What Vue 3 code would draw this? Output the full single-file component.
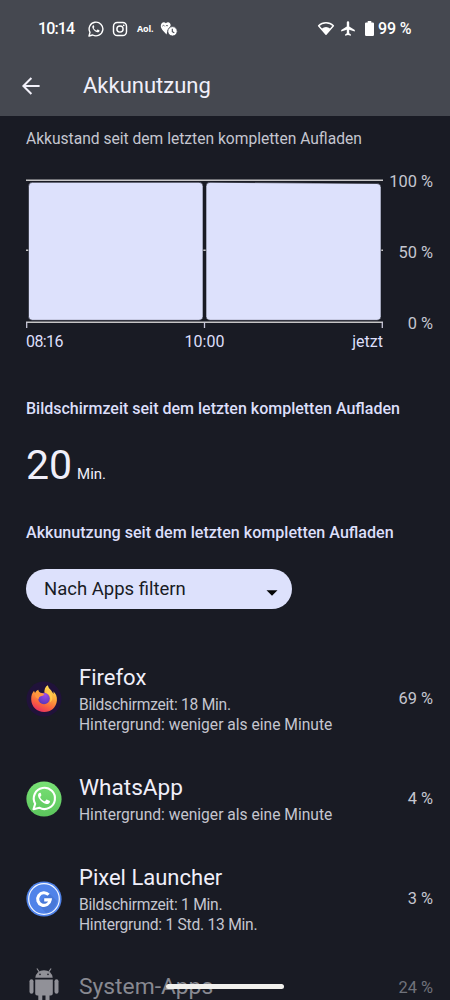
<script setup>
const apps = [
  { id: 'firefox', name: 'Firefox', lines: ['Bildschirmzeit: 18 Min.', 'Hintergrund: weniger als eine Minute'], pct: '69 %' },
  { id: 'whatsapp', name: 'WhatsApp', lines: ['Hintergrund: weniger als eine Minute'], pct: '4 %' },
  { id: 'launcher', name: 'Pixel Launcher', lines: ['Bildschirmzeit: 1 Min.', 'Hintergrund: 1 Std. 13 Min.'], pct: '3 %' },
  { id: 'system', name: 'System-Apps', lines: [], pct: '24 %' },
]
const hasDigits = (text) => /\d/.test(text)
</script>

<template>
  <div class="screen">
    <header class="top">
      <div class="status">
        <span class="clock">10:14</span>
        <svg class="s-wa" width="16" height="16" viewBox="0 0 24 24">
          <path d="M1.5 22.5 3 17A10.3 10.3 0 1 1 7 21Z" fill="none" stroke="#fff" stroke-width="2.1" stroke-linejoin="round" />
          <path d="M8.8 6.8c-.5-.6-1.100-.4-1.500 0-1.300 1.300-1 3.200.1 4.900 1.600 2.500 3.700 4.400 6.400 5.200 1.600.4 3.200-.5 3.500-1.800.1-.6.1-.9-.4-1.200l-2-1c-.5-.2-.8 0-1.100.4l-.7.9c-.3.3-.6.2-1 .1-1.600-.8-2.700-1.900-3.500-3.300-.2-.4 0-.6.200-.9l.6-.8c.1-.3.1-.5 0-.8Z" fill="#fff" />
        </svg>
        <svg class="s-ig" width="16" height="16" viewBox="0 0 16 16" fill="none" stroke="#fff" stroke-width="1.45">
          <rect x="1.500" y="1.500" width="13" height="13" rx="3.800" />
          <circle cx="8" cy="8" r="3.100" />
          <circle cx="11.700" cy="4.300" r=".9" fill="#fff" stroke="none" />
        </svg>
        <span class="aol">Aol.</span>
        <svg class="s-heart" width="18" height="16" viewBox="0 0 18 16">
          <path d="M6.500 13.500C4.500 11 .8 8.300.8 5 .8 1.500 4 .1 5.900 2.200 7.700.1 11 1.300 10.600 4.800L7.500 9.500Z" fill="#fff" />
          <path d="M2.300 5.200q1-1.600 2.300-.2M5.800 5q1.300-1.500 2.200.1" fill="none" stroke="#454850" stroke-width=".8" />
          <circle cx="12.500" cy="10.300" r="4.700" fill="#fff" stroke="#454850" stroke-width=".8" />
          <path d="M12.300 7.800v2.800l2 1.200" fill="none" stroke="#454850" stroke-width="1.100" />
        </svg>
        <span class="grow"></span>
        <svg class="s-wifi" width="18" height="15" viewBox="0 0 18 15">
          <path d="M1.600 4.800C5.700.8 12.300.8 16.400 4.800L9 13.300Z" fill="none" stroke="#fff" stroke-width="1.400" stroke-linejoin="round" />
          <path d="M4.600 7.700Q9 4.300 13.400 7.700L9 13.600Z" fill="#fff" />
        </svg>
        <svg class="s-plane" width="14" height="15" viewBox="0 0 14 15">
          <path d="M7 .3c.8 0 1.200.6 1.200 1.400v3.800l5.600 3.500v1.500L8.200 8.800v3.500l1.700 1.200v1.200L7 13.900l-2.900.8v-1.200l1.700-1.200V8.800L.2 10.500V9l5.600-3.500V1.700C5.800.9 6.200.3 7 .3Z" fill="#fff" />
        </svg>
        <svg class="s-bat" width="9" height="15" viewBox="0 0 9 15">
          <path d="M2.700 0h3.600v1.400h1.500q1.200 0 1.200 1.200v11.200Q9 15 7.800 15H1.200Q0 15 0 13.800V2.600Q0 1.400 1.200 1.400h1.500Z" fill="#fff" />
        </svg>
        <span class="charge">99 %</span>
      </div>
      <div class="toolbar">
        <svg width="20" height="20" viewBox="0 0 20 20" fill="none" stroke="#f2f1fa" stroke-width="2">
          <path d="M18.600 10H2.700M10.400 2 2.400 10l8 8" />
        </svg>
        <h1>Akkunutzung</h1>
      </div>
    </header>

    <main>
      <p class="caption">Akkustand seit dem letzten kompletten Aufladen</p>
      <div class="chart">
        <div class="plot">
          <svg width="357" height="150" viewBox="0 0 357 150">
            <path d="M0 2.300H357M0 72.300H357M0 144.200H357" stroke="#c6c5c6" stroke-width="1.400" />
            <path d="M.7 144v6.500M178.500 144v6.500M356.300 144v6.500" stroke="#c6c5d8" stroke-width="1.300" />
            <path d="M6.500 4.300H173Q177 4.300 177 8.300V138.500Q177 142.300 173 142.300H6.500Q2.500 142.300 2.500 138.500V8.300Q2.500 4.300 6.500 4.300Z" fill="#dde1fc" stroke="#191b24" stroke-width=".6" />
            <path d="M184 4.300 351 5.500Q355 5.500 355 9.500V138.500Q355 142.300 351 142.300H184Q180 142.300 180 138.500V8.300Q180 4.300 184 4.300Z" fill="#dde1fc" stroke="#191b24" stroke-width=".6" />
          </svg>
          <div class="times"><span class="t1">08:16</span><span class="t2">10:00</span><span class="t3">jetzt</span></div>
        </div>
        <div class="scale"><span>100 %</span><span>50 %</span><span>0 %</span></div>
      </div>

      <h2 class="h-screen">Bildschirmzeit seit dem letzten kompletten Aufladen</h2>
      <div class="total"><span class="num">20</span><span class="unit">Min.</span></div>
      <h2 class="h-usage">Akkunutzung seit dem letzten kompletten Aufladen</h2>

      <button class="filter">
        <span>Nach Apps filtern</span>
        <svg width="12" height="6" viewBox="0 0 12 6"><path d="M.5.3h11L6 5.700Z" fill="#050506" /></svg>
      </button>

      <ul>
        <li v-for="app in apps" :key="app.id" :class="app.id">
          <svg v-if="app.id === 'firefox'" class="icon" viewBox="0 0 36 36">
            <defs>
              <linearGradient id="flame" x1=".75" y1="0" x2=".3" y2="1">
                <stop offset="0" stop-color="#ffe45a" /><stop offset=".4" stop-color="#fda63a" /><stop offset=".72" stop-color="#f9623f" /><stop offset="1" stop-color="#e62d62" />
              </linearGradient>
              <radialGradient id="globe" cx=".6" cy=".2" r=".9">
                <stop offset="0" stop-color="#9a4be8" /><stop offset="1" stop-color="#5234b4" />
              </radialGradient>
            </defs>
            <circle cx="18" cy="18" r="17.500" fill="#20123a" />
            <path d="M5.200 18.500C5 14.500 6.300 11.800 8 9.800L9 12q1-2.200 3.200-3.200Q12.500 10.700 14.300 12L18.500 12.500Q17.800 6.500 21.800 4.300 22.300 7.300 25 9.200L27.500 13Q27.800 11.500 27.300 10.300C30 12.500 31.200 16 30.900 19.500 30.200 26.500 25 31 18.200 31 11 31 5.500 25.800 5.200 18.500Z" fill="url(#flame)" />
            <circle cx="18" cy="17.500" r="5.800" fill="url(#globe)" />
            <path d="M8.700 13Q13 10 18.500 13 17.800 15 14.700 15.300 12.600 16 12.700 18 9 17 8.700 13Z" fill="#ff9640" />
            <path d="M20.300 11.800Q25.800 14.200 24 21.500 28 18 25.300 12.500L22.300 9Z" fill="#ffc84c" />
          </svg>
          <svg v-else-if="app.id === 'whatsapp'" class="icon" viewBox="0 0 36 36">
            <defs><linearGradient id="green" x1="0" y1="0" x2="0" y2="1"><stop offset="0" stop-color="#7ae276" /><stop offset="1" stop-color="#5bc55c" /></linearGradient></defs>
            <circle cx="18" cy="18" r="17.600" fill="url(#green)" />
            <path d="M7.500 28.200 9.200 22.700A10.600 10.600 0 1 1 13.300 26.700Z" fill="none" stroke="#fff" stroke-width="2.100" stroke-linejoin="round" />
            <path d="M14.700 12c-.5-.6-1.200-.4-1.700.1-1.500 1.500-1.100 3.500.1 5.400 1.800 2.800 4.200 4.700 7.100 5.500 1.700.4 3.500-.6 3.700-2 .1-.6.1-.9-.4-1.200l-2.300-1.100c-.5-.2-.8 0-1.100.3l-.9 1.100c-.3.3-.6.3-1 .1-1.700-.8-3-2-3.900-3.700-.2-.3-.1-.6.200-.9l.7-.9c.2-.3.2-.6.1-.9Z" fill="#fff" />
          </svg>
          <svg v-else-if="app.id === 'launcher'" class="icon" viewBox="0 0 36 36">
            <circle cx="18" cy="18" r="17.600" fill="#5083e9" />
            <path d="M23 12 31 20A14 14 0 0 1 20 32L12 23Z" fill="#4878d8" />
            <circle cx="18" cy="18" r="15.300" fill="none" stroke="#f4f8ff" stroke-width="1.200" />
            <path d="M22.600 13.800A6.300 6.300 0 1 0 24.200 18.900H18.200" fill="none" stroke="#fff" stroke-width="3.100" />
          </svg>
          <svg v-else class="icon" viewBox="0 0 36 36" fill="#919198">
            <path d="M9.300 10.800A8.700 7.500 0 0 1 26.700 10.800Z" />
            <path d="m13.300 5-2.400-3.500m11.800 3.500 2.400-3.500" stroke="#919198" stroke-width="1.200" />
            <circle cx="14" cy="7.400" r=".8" fill="#191b24" /><circle cx="22" cy="7.400" r=".8" fill="#191b24" />
            <rect x="3.500" y="12.300" width="4" height="14.500" rx="2" /><rect x="28.500" y="12.300" width="4" height="14.500" rx="2" />
            <path d="M9.200 12.500h17.600v14q0 2-2 2h-1.300v7.500h-4v-7.500h-3.200v7.500h-4v-7.500h-1.100q-2 0-2-2Z" />
          </svg>
          <div class="info">
            <div class="name">{{ app.name }}</div>
            <div v-for="line in app.lines" :key="line" class="line" :class="{ tight: hasDigits(line) }">{{ line }}</div>
          </div>
          <span class="pct">{{ app.pct }}</span>
        </li>
      </ul>
    </main>
    <div class="home"></div>
  </div>
</template>

<style>
body { background: #191b24; }
</style>

<style scoped>
.screen { position: relative; width: 450px; height: 1000px; overflow: hidden; background: #191b24; color: #f0effa; font-family: Roboto, sans-serif; font-size: 16px; }
h1, h2, p, ul { margin: 0; padding: 0; font-weight: 400; }
svg { display: block; flex: none; }
span { white-space: nowrap; }
.top { height: 116px; background: #454850; box-sizing: border-box; }
.status { display: flex; align-items: center; height: 57px; padding: 0 38px; color: #fff; }
.clock { width: 50px; font-size: 16px; font-weight: 500; letter-spacing: -.9px; }
.clock, .charge { line-height: 20px; }
.s-ig { margin-left: 8px; }
.aol { margin-left: 9px; width: 17px; font: 700 9px/12px "Open Sans", sans-serif; letter-spacing: -.2px; }
.s-heart { margin-left: 6px; }
.grow { flex: 1; }
.s-plane { margin-left: 6px; }
.s-bat { margin-left: 10px; }
.charge { margin-left: 4px; width: 34px; font-weight: 500; letter-spacing: -.1px; }
.toolbar { display: flex; align-items: center; height: 58px; padding-left: 21px; }
h1 { margin-left: 42px; font-size: 22px; line-height: 28px; }
main { padding: 13px 17px 0 26px; }
.caption { height: 20px; font-size: 15.6px; line-height: 20px; color: #c5c6d0; }
.chart { display: flex; justify-content: space-between; height: 172px; margin-top: 29px; }
.plot { width: 357px; }
.times { display: grid; grid-template-columns: 1fr 1fr 1fr; padding-top: 4px; line-height: 20px; color: #dddffa; }
.t1 { letter-spacing: -.6px; }
.t2 { text-align: center; }
.t3 { text-align: right; }
.scale { display: flex; flex-direction: column; gap: 51px; margin-top: -6px; text-align: right; line-height: 20px; color: #c5c6d0; }
.scale, .pct { font-size: 16.4px; }
h2 { font-size: 16px; font-weight: 500; line-height: 20px; color: #dcdffa; white-space: nowrap; }
.h-screen { margin-top: 49px; }
.total { display: flex; align-items: baseline; height: 48px; margin-top: 22px; }
.num { font-size: 41px; line-height: 48px; }
.unit { margin-left: 5px; font-size: 15px; }
.h-usage { margin-top: 34px; font-size: 16.08px; }
.filter { display: flex; align-items: center; justify-content: space-between; width: 266px; height: 40px; margin-top: 26px; padding: 0 14px 0 18px; border: 0; border-radius: 20px; background: #dde1fc; color: #191b24; font: 400 18.5px/24px Roboto, sans-serif; }
.filter svg { margin-top: 7px; }
ul { margin-top: 35px; list-style: none; }
li { display: flex; align-items: center; padding: 20px 0; }
.icon { width: 36px; height: 36px; margin-left: -.5px; }
.info { flex: 1; margin-left: 17.5px; }
.name { height: 30px; font-size: 22px; line-height: 28px; }
.whatsapp .name { font-size: 22.6px; }
.line { position: relative; top: 1px; font-size: 15.6px; }
.tight { letter-spacing: -.25px; }
.line, .pct { line-height: 20px; color: #c5c6d0; }
.system { padding-top: 18px; color: #888991; }
.system .icon { margin-top: -5px; }
.system .name { font-size: 22.8px; }
.system .pct { color: #70727b; }
.home { position: absolute; left: 166px; top: 984px; width: 118px; height: 5px; border-radius: 3px; background: #f1f0ed; }
</style>
